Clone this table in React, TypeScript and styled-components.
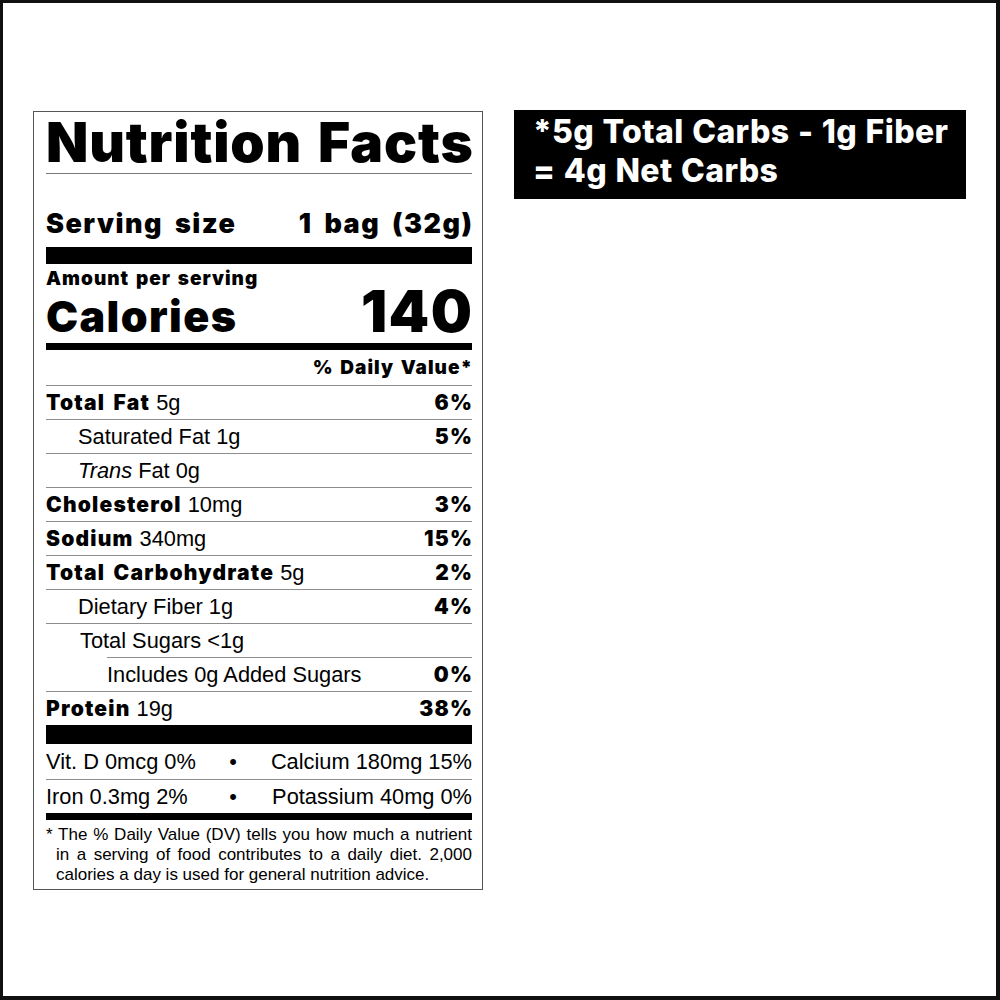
import React from "react";
import styled, { createGlobalStyle } from "styled-components";

const GlobalStyle = createGlobalStyle`
  html, body { margin: 0; padding: 0; background: #fff; }
  body { font-family: "Liberation Sans", Arial, sans-serif; color: #000; }
`;

const HEAVY = `Inter, "Liberation Sans", sans-serif`;

const Frame = styled.div`
  width: 1000px;
  height: 1000px;
  box-sizing: border-box;
  border-style: solid;
  border-color: #111;
  border-width: 3px 4px 4px 3px;
  display: flex;
  align-items: flex-start;
  gap: 31px;
  padding: 107px 0 0 30px;
`;

const Label = styled.section`
  width: 450px;
  box-sizing: border-box;
  margin-top: 1px;
  border: 1px solid #555;
  padding: 0 10px 0 12px;
  display: flex;
  flex-direction: column;
`;

const Title = styled.h1`
  margin: 0;
  font-family: ${HEAVY};
  font-weight: 900;
  font-size: 55px;
  line-height: 61px;
  height: 61px;
  letter-spacing: 0.85px;
  word-spacing: 4px;
  white-space: nowrap;
  border-bottom: 1px solid #777;
`;

const Serving = styled.div`
  height: 73px;
  box-sizing: border-box;
  display: flex;
  align-items: flex-end;
  justify-content: space-between;
  padding-bottom: 10px;
  font-family: ${HEAVY};
  font-weight: 900;
  font-size: 27px;
  line-height: 26px;
  letter-spacing: 1.5px;
  word-spacing: 5px;
  white-space: nowrap;
`;

const TrimEnd = styled.span<{ $ls: number }>`
  margin-right: ${(p) => -p.$ls}px;
`;

const Bar = styled.div<{ $h: number }>`
  height: ${(p) => p.$h}px;
  background: #000;
`;

const CalSection = styled.div`
  height: 79px;
  box-sizing: border-box;
  padding-top: 4px;
  display: flex;
  flex-direction: column;
  font-family: ${HEAVY};
  font-weight: 900;
`;

const Amount = styled.div`
  font-size: 19px;
  line-height: 22px;
  letter-spacing: 1px;
  word-spacing: 2px;
`;

const CalRow = styled.div`
  display: flex;
  justify-content: space-between;
  align-items: baseline;
  height: 42px;
  line-height: 42px;
`;

const CalWord = styled.span`
  font-size: 43px;
  letter-spacing: 1.4px;
`;

const CalNum = styled.span`
  font-size: 58px;
  letter-spacing: 1.4px;
  margin-right: -1.4px;
`;

const DVHead = styled.div`
  height: 35px;
  line-height: 35px;
  text-align: right;
  font-family: ${HEAVY};
  font-weight: 900;
  font-size: 19px;
  letter-spacing: 1px;
  word-spacing: 2px;
  margin-right: -1px;
`;

const Row = styled.div<{ $indent?: number; $inset?: number; $h?: number }>`
  display: flex;
  justify-content: space-between;
  align-items: center;
  height: ${(p) => p.$h ?? 33}px;
  line-height: ${(p) => p.$h ?? 33}px;
  border-top: 1px solid #8c8c8c;
  margin-left: ${(p) => p.$inset ?? 0}px;
  padding-left: ${(p) => p.$indent ?? 0}px;
  font-size: 21.8px;
  white-space: nowrap;
`;

const B = styled.b`
  font-family: ${HEAVY};
  font-weight: 900;
  font-size: 21px;
  letter-spacing: 1.2px;
  word-spacing: 3px;
`;

const Pct = styled.b`
  font-family: ${HEAVY};
  font-weight: 900;
  font-size: 21px;
  letter-spacing: 1.3px;
  margin-right: -1.3px;
`;

const MinRow = styled.div<{ $h: number; $line?: boolean }>`
  display: grid;
  grid-template-columns: 180px 14px 1fr;
  height: ${(p) => p.$h}px;
  line-height: ${(p) => p.$h}px;
  border-top: ${(p) => (p.$line ? "1px solid #8c8c8c" : "none")};
  font-size: 21.8px;
  white-space: nowrap;
`;

const Dot = styled.span`
  text-align: center;
`;

const RightText = styled.span`
  text-align: right;
`;

const Foot = styled.div`
  padding: 5px 0 4px 10px;
  font-size: 17px;
  line-height: 20px;
`;

const FootLine = styled.span<{ $first?: boolean; $last?: boolean }>`
  display: block;
  text-align: justify;
  text-align-last: ${(p) => (p.$last ? "left" : "justify")};
  margin-left: ${(p) => (p.$first ? -10 : 0)}px;
  white-space: nowrap;
`;

const Note = styled.div`
  width: 452px;
  height: 89px;
  box-sizing: border-box;
  background: #000;
  color: #fff;
  font-family: ${HEAVY};
  font-weight: 800;
  font-size: 32px;
  line-height: 39px;
  letter-spacing: 0.4px;
  word-spacing: 1px;
  padding: 2px 0 0 19px;
  white-space: nowrap;
`;

const NoteLine = styled.span`
  display: block;
`;

type Nut = {
  name: string;
  amount: string;
  pct?: string;
  bold?: boolean;
  indent?: number;
  inset?: number;
  italic?: string;
};

const nutrients: Nut[] = [
  { name: "Total Fat", amount: "5g", pct: "6%", bold: true },
  { name: "Saturated Fat", amount: "1g", pct: "5%", indent: 32 },
  { name: "Fat", amount: "0g", indent: 32, italic: "Trans" },
  { name: "Cholesterol", amount: "10mg", pct: "3%", bold: true },
  { name: "Sodium", amount: "340mg", pct: "15%", bold: true },
  { name: "Total Carbohydrate", amount: "5g", pct: "2%", bold: true },
  { name: "Dietary Fiber", amount: "1g", pct: "4%", indent: 32 },
  { name: "Total Sugars", amount: "<1g", indent: 34 },
  { name: "Includes 0g Added Sugars", amount: "", pct: "0%", inset: 61 },
  { name: "Protein", amount: "19g", pct: "38%", bold: true },
];

export default function App() {
  return (
    <>
      <GlobalStyle />
      <Frame>
        <Label>
          <Title>Nutrition Facts</Title>
          <Serving>
            <span>Serving size</span>
            <TrimEnd $ls={1.5}>1 bag (32g)</TrimEnd>
          </Serving>
          <Bar $h={17} />
          <CalSection>
            <Amount>Amount per serving</Amount>
            <CalRow>
              <CalWord>Calories</CalWord>
              <CalNum>140</CalNum>
            </CalRow>
          </CalSection>
          <Bar $h={7} />
          <DVHead>% Daily Value*</DVHead>
          {nutrients.map((n) => (
            <Row key={n.name} $indent={n.indent} $inset={n.inset}>
              <span>
                {n.italic && <i>{n.italic} </i>}
                {n.bold ? <B>{n.name}</B> : n.name}
                {n.amount ? ` ${n.amount}` : ""}
              </span>
              {n.pct && <Pct>{n.pct}</Pct>}
            </Row>
          ))}
          <Bar $h={19} />
          <MinRow $h={35}>
            <span>Vit. D 0mcg 0%</span>
            <Dot>•</Dot>
            <RightText>Calcium 180mg 15%</RightText>
          </MinRow>
          <MinRow $h={33} $line>
            <span>Iron 0.3mg 2%</span>
            <Dot>•</Dot>
            <RightText>Potassium 40mg 0%</RightText>
          </MinRow>
          <Bar $h={7} />
          <Foot>
            <FootLine $first>* The % Daily Value (DV) tells you how much a nutrient</FootLine>
            <FootLine>in a serving of food contributes to a daily diet. 2,000</FootLine>
            <FootLine $last>calories a day is used for general nutrition advice.</FootLine>
          </Foot>
        </Label>
        <Note>
          <NoteLine>*5g Total Carbs - 1g Fiber</NoteLine>
          <NoteLine>= 4g Net Carbs</NoteLine>
        </Note>
      </Frame>
    </>
  );
}
